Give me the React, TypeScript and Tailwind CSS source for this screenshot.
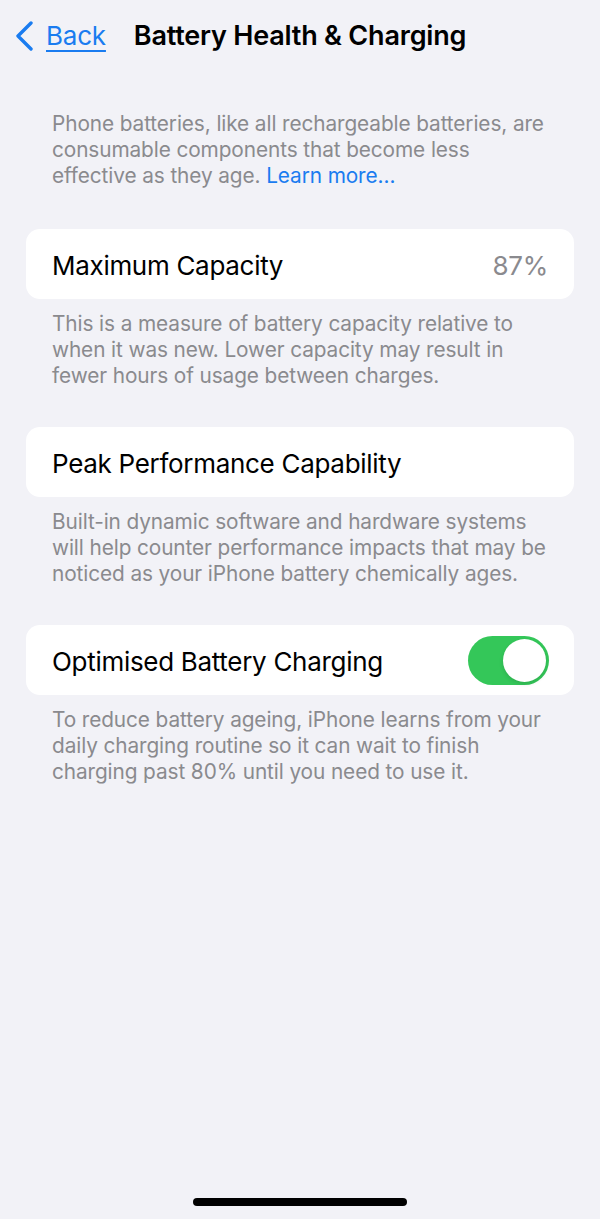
import React from 'react';

// Settings rows data
const sections = [
  {
    id: 'capacity',
    label: 'Maximum Capacity',
    value: '87%',
    footer:
      'This is a measure of battery capacity relative to when it was new. Lower capacity may result in fewer hours of usage between charges.',
  },
  {
    id: 'peak',
    label: 'Peak Performance Capability',
    footer:
      'Built-in dynamic software and hardware systems will help counter performance impacts that may be noticed as your iPhone battery chemically ages.',
  },
  {
    id: 'optimised',
    label: 'Optimised Battery Charging',
    toggle: true,
    footer:
      'To reduce battery ageing, iPhone learns from your daily charging routine so it can wait to finish charging past 80% until you need to use it.',
  },
];

const Toggle = ({ on }: { on: boolean }) => (
  <div
    className={`w-[81px] h-[49px] rounded-full p-[3px] flex ${
      on ? 'bg-[#34c759] justify-end' : 'bg-[#e9e9ea] justify-start'
    }`}
  >
    <div className="w-[43px] h-[43px] rounded-full bg-white shadow-[0_2px_4px_rgba(0,0,0,0.12)]" />
  </div>
);

export default function App() {
  return (
    <div
      className="w-[600px] h-[1219px] bg-[#f2f2f7] flex flex-col overflow-hidden"
      style={{ fontFamily: 'Inter, "Noto Sans", sans-serif' }}
    >
      {/* Nav bar */}
      <div className="grid grid-cols-[1fr_auto_1fr] items-center h-[72px] pb-[1px]">
        <div className="flex items-center pl-[14px]">
          <svg width="20" height="30" viewBox="0 0 20 30" fill="none">
            <path
              d="M17 2 L4 15 L17 28"
              stroke="#1a7cf0"
              strokeWidth="3.4"
              strokeLinecap="round"
              strokeLinejoin="round"
            />
          </svg>
          <span className="ml-[12px] text-[26px] leading-none text-[#1a7cf0] underline underline-offset-[5px] decoration-[1.5px] tracking-[-0.2px]">
            Back
          </span>
        </div>
        <h1 className="text-[27px] font-semibold text-black tracking-[-0.2px] leading-none">
          Battery Health &amp; Charging
        </h1>
        <div />
      </div>

      {/* Intro */}
      <p className="mt-[39px] pl-[52px] pr-[52px] text-[20.8px] leading-[26px] text-[#8a8a8e] tracking-[-0.1px]">
        Phone batteries, like all rechargeable batteries, are consumable components that become less effective as
        they age. <span className="text-[#1a7cf0]">Learn more…</span>
      </p>

      <div className="flex flex-col gap-[38px] mt-[40px]">
        {sections.map((s) => (
          <div key={s.id}>
            <div className="mx-[26px] h-[70px] bg-white rounded-[14px] flex items-center justify-between pl-[26px] pr-[26px] pt-[2px]">
              <span className="text-[26px] text-black tracking-[-0.3px]">{s.label}</span>
              {s.value && <span className="text-[26px] text-[#8a8a8e] tracking-[-0.3px]">{s.value}</span>}
              {s.toggle && (
                <div className="-mr-[1px] -mt-[2px]">
                  <Toggle on />
                </div>
              )}
            </div>
            <p className="mt-[12px] pl-[52px] pr-[52px] text-[20.8px] leading-[26px] text-[#8a8a8e] tracking-[-0.1px]">
              {s.footer}
            </p>
          </div>
        ))}
      </div>

      {/* Home indicator */}
      <div className="mt-auto mb-[13px] flex justify-center">
        <div className="w-[214px] h-[8px] rounded-full bg-black" />
      </div>
    </div>
  );
}
